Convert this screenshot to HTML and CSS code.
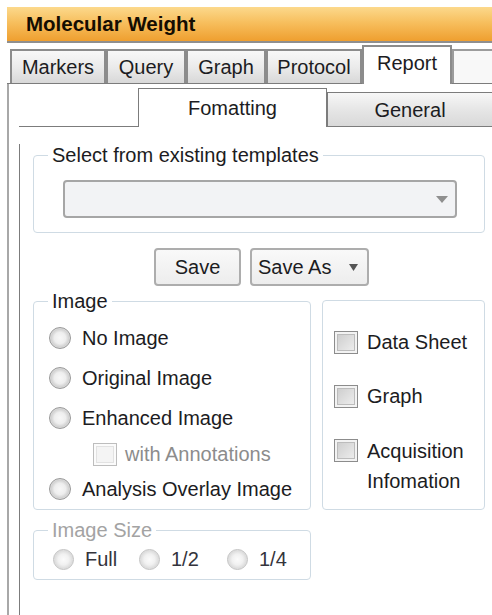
FILE: index.html
```html
<!DOCTYPE html>
<html lang="en">
<head>
<meta charset="utf-8">
<title>Molecular Weight</title>
<link rel="stylesheet" href="styles.css">
</head>
<body>
<div class="app">
  <div class="titlebar">Molecular Weight</div>
  <div class="title-rule"></div>

  <div class="tabstrip">
    <div class="tab tab-markers">Markers</div>
    <div class="tab tab-query">Query</div>
    <div class="tab tab-graph">Graph</div>
    <div class="tab tab-protocol">Protocol</div>
    <div class="tab tab-report is-active">Report</div>
    <div class="tab-filler"></div>
  </div>

  <div class="panel">
    <div class="subtabs">
      <div class="subtab-spacer"></div>
      <div class="subtab subtab-format is-active">Fomatting</div>
      <div class="subtab subtab-general">General</div>
    </div>

    <div class="page">
      <fieldset class="group group-templates">
        <legend>Select from existing templates</legend>
        <div class="combo">
          <svg class="combo-arrow" width="12" height="7" viewBox="0 0 12 7"><path d="M0 0h12L6 7z" fill="#8f8f8f"/></svg>
        </div>
      </fieldset>

      <div class="actions">
        <button class="btn btn-save" type="button">Save</button>
        <button class="btn btn-saveas" type="button">Save As
          <svg class="btn-arrow" width="9" height="8" viewBox="0 0 9 8"><path d="M0 1h9L4.5 8z" fill="#555"/></svg>
        </button>
      </div>

      <div class="options">
        <fieldset class="group group-image">
          <legend>Image</legend>
          <div class="image-rows">
            <div class="radio-row"><span class="radio"></span><span>No Image</span></div>
            <div class="radio-row"><span class="radio"></span><span>Original Image</span></div>
            <div class="radio-row"><span class="radio"></span><span>Enhanced Image</span></div>
            <div class="sub-row"><span class="check is-disabled"></span><span>with Annotations</span></div>
            <div class="radio-row radio-row-last"><span class="radio"></span><span>Analysis Overlay Image</span></div>
          </div>
        </fieldset>

        <div class="group group-include">
          <div class="check-row"><span class="check"></span><span>Data Sheet</span></div>
          <div class="check-row"><span class="check"></span><span>Graph</span></div>
          <div class="check-row check-row-multi"><span class="check"></span><span>Acquisition<br>Infomation</span></div>
        </div>
      </div>

      <fieldset class="group group-size">
        <legend>Image Size</legend>
        <div class="size-row">
          <div class="size-opt size-full"><span class="radio radio-small"></span><span>Full</span></div>
          <div class="size-opt size-half"><span class="radio radio-small"></span><span>1/2</span></div>
          <div class="size-opt size-quarter"><span class="radio radio-small"></span><span>1/4</span></div>
        </div>
      </fieldset>
    </div>
  </div>
</div>
</body>
</html>
```

FILE: styles.css
```css
* { box-sizing: border-box; }

body {
  margin: 0;
  background: #fff;
  font-family: "Liberation Sans", Arial, sans-serif;
  font-size: 20px;
  color: #1c1c22;
}

.app {
  width: 492px;
  height: 615px;
  overflow: hidden;
  padding-top: 7px;
}

/* window caption */
.titlebar {
  margin-left: 7px;
  height: 34px;
  line-height: 34px;
  padding-left: 19px;
  font-size: 20.5px;
  font-weight: 700;
  color: #140d02;
  background: linear-gradient(#fcd98c, #f7bf5e 45%, #ef9f2f);
}

.title-rule {
  margin-left: 7px;
  height: 2px;
  margin-bottom: 1px;
  background: #8f8f8f;
}

/* top level tabs */
.tabstrip {
  display: flex;
  align-items: flex-end;
  margin-left: 7px;
  padding-left: 3px;
  height: 40px;
  border-bottom: 1px solid #7c7c7c;
}

.tab {
  height: 34px;
  border: 2px solid #8c8c8c;
  border-bottom: 0;
  background: linear-gradient(#f8f8f8, #ebebeb 50%, #d8d8d8);
  text-align: center;
  line-height: 32px;
}

.tab-markers { width: 96px; }
.tab-query { width: 80px; }
.tab-graph { width: 80px; }
.tab-protocol { width: 96px; }
.tab-report { width: 90px; }

.tab.is-active {
  height: 39px;
  margin-bottom: -1px;
  background: #fff;
  line-height: 32px;
}

.tab-filler {
  width: 40px;
  height: 34px;
  border: 2px solid #9c9c9c;
  border-right: 0;
  border-bottom: 0;
  background: #f8f8f8;
}

/* tab body */
.panel {
  margin-left: 7px;
  height: 531px;
  border-left: 2px solid #a8a8a8;
}

.subtabs {
  display: flex;
  align-items: flex-start;
  height: 43px;
}

.subtab-spacer {
  width: 119px;
  margin-left: 10px;
  align-self: stretch;
  border-bottom: 1px solid #7c7c7c;
}

.subtab { text-align: center; }

.subtab-format {
  width: 189px;
  height: 39px;
  margin-top: 4px;
  border: 1px solid #7c7c7c;
  border-bottom: 0;
  background: #fff;
  line-height: 38px;
}

.subtab-general {
  flex: 1;
  height: 35px;
  margin-top: 8px;
  border: 1px solid #7c7c7c;
  border-right: 0;
  background: linear-gradient(#f7f7f7, #e6e6e6 50%, #d9d9d9);
  line-height: 34px;
}

.page {
  margin-left: 10px;
  height: 488px;
  border-left: 1px solid #7c7c7c;
  padding: 0 7px 0 13px;
}

/* group boxes */
.group {
  margin: 0;
  padding: 0;
  min-width: 0;
  border: 1px solid #cfdbe4;
  border-radius: 4px;
}

.group legend {
  margin-left: 14px;
  padding: 0 4px;
  line-height: 22px;
}

.group-templates { margin-top: 17px; }

.combo {
  margin: 14px 27px 14px 29px;
  height: 38px;
  border: 2px solid #a6a6a6;
  border-radius: 4px;
  background: #f2f3f5;
  display: flex;
  align-items: center;
  justify-content: flex-end;
  padding-right: 7px;
}

.actions {
  display: flex;
  gap: 9px;
  margin: 15px 0 0 121px;
}

.btn {
  font: inherit;
  color: inherit;
  height: 38px;
  padding: 0;
  border: 2px solid #adadad;
  border-radius: 4px;
  background: linear-gradient(#f9f9f9, #ededed);
  display: flex;
  align-items: center;
  justify-content: center;
}

.btn-save { width: 87px; }

.btn-saveas {
  width: 119px;
  justify-content: flex-start;
  padding-left: 6px;
}

.btn-arrow { margin-left: 18px; }

.options {
  display: flex;
  margin-top: 4px;
}

.group-image { width: 278px; }

.image-rows { padding: 6px 0 1px 15px; }

.radio-row {
  display: flex;
  align-items: center;
  gap: 11px;
  height: 40px;
}

.radio-row-last { height: 38px; }

.sub-row {
  display: flex;
  align-items: center;
  gap: 8px;
  height: 32px;
  padding-left: 44px;
  color: #8c8c8c;
}

/* round option button: grey ring around a soft light centre */
.radio {
  flex: none;
  width: 22px;
  height: 22px;
  border-radius: 50%;
  border: 1px solid #999;
  background: radial-gradient(circle at 50% 50%, #f7f7f7 0, #eeeeee 40%, #d2d2d2 62%, #e6e6e6 78%, #c4c4c4 100%);
}

.radio-small {
  width: 21px;
  height: 21px;
  border-color: #c2c2c2;
  background: radial-gradient(circle at 50% 50%, #fbfbfb 0, #f1f1f1 40%, #dddddd 65%, #ececec 80%, #d4d4d4 100%);
}

.check {
  flex: none;
  width: 24px;
  height: 23px;
  border: 1px solid #8c8c8c;
  background: linear-gradient(135deg, #c9c9c9, #f2f2f2);
  box-shadow: inset 0 0 0 2px #f3f3f3, inset 0 0 0 3px #bcbcbc;
}

.check.is-disabled {
  border-color: #bdbdbd;
  background: #f4f4f4;
  box-shadow: inset 0 0 0 2px #fbfbfb, inset 0 0 0 3px #e2e2e2;
}

.group-include {
  flex: 1;
  margin: 10px 0 0 11px;
  padding: 30px 0 0 11px;
}

.check-row {
  display: flex;
  align-items: center;
  gap: 9px;
  height: 23px;
}

.check-row + .check-row { margin-top: 31px; }

.check-row-multi {
  align-items: flex-start;
  height: auto;
  line-height: 30px;
}

.check-row + .check-row-multi { margin-top: 28px; }

.check-row-multi .check { margin-top: 3px; }

.group-size {
  width: 278px;
  margin-top: 9px;
}

.group-size legend { color: #a3a3a3; }

.size-row {
  display: flex;
  align-items: center;
  height: 38px;
  padding: 2px 0 4px 19px;
}

.size-opt {
  display: flex;
  align-items: center;
  gap: 11px;
  color: #34343c;
}

.size-full { width: 86px; }
.size-half { width: 88px; }
```
